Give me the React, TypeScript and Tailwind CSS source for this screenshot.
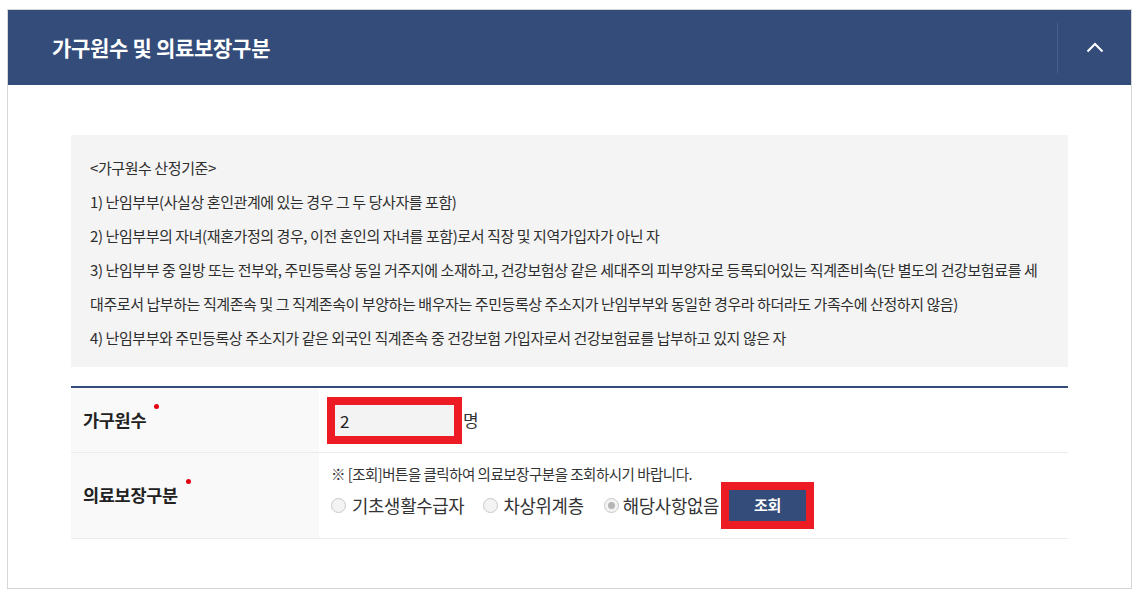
import React from "react";

const F = { fontFamily: '"Noto Sans CJK KR", "Noto Sans", sans-serif' };

function Radio({ checked }: { checked?: boolean }) {
  return (
    <span className="flex h-[15px] w-[15px] items-center justify-center rounded-full border border-[#c9c9c9] bg-[#f3f3f3]">
      {checked && <span className="h-[7px] w-[7px] rounded-full bg-[#b5b5b5]" />}
    </span>
  );
}

export default function App() {
  const lines = [
    "<가구원수 산정기준>",
    "1) 난임부부(사실상 혼인관계에 있는 경우 그 두 당사자를 포함)",
    "2) 난임부부의 자녀(재혼가정의 경우, 이전 혼인의 자녀를 포함)로서 직장 및 지역가입자가 아닌 자",
    "3) 난임부부 중 일방 또는 전부와, 주민등록상 동일 거주지에 소재하고, 건강보험상 같은 세대주의 피부양자로 등록되어있는 직계존비속(단 별도의 건강보험료를 세",
    "대주로서 납부하는 직계존속 및 그 직계존속이 부양하는 배우자는 주민등록상 주소지가 난임부부와 동일한 경우라 하더라도 가족수에 산정하지 않음)",
    "4) 난임부부와 주민등록상 주소지가 같은 외국인 직계존속 중 건강보험 가입자로서 건강보험료를 납부하고 있지 않은 자",
  ];
  return (
    <div className="h-[593px] w-[1137px] bg-white pl-[7px] pt-[9px]" style={F}>
      <div className="h-[580px] w-[1125px] border border-[#d6d6d6]">
        <div className="flex h-[75px] items-center bg-[#344c79]">
          <div className="flex-1 pl-[44px] text-[21px] font-bold tracking-[-0.3px] text-white">
            가구원수 및 의료보장구분
          </div>
          <div className="h-[50px] w-px bg-[#4b6089]" />
          <div className="flex w-[73px] items-center justify-center">
            <svg width="18" height="11" viewBox="0 0 18 11" fill="none">
              <path d="M1.5 9.5 L9 2 L16.5 9.5" stroke="white" strokeWidth="2" />
            </svg>
          </div>
        </div>
        <div className="px-[63px] pt-[50px]">
          <div className="h-[232px] bg-[#f4f4f4] px-[19px] py-[16px] text-[15px] tracking-[-0.42px] text-[#2e2e2e]">
            {lines.map((l, i) => (
              <div key={i} className="h-[34px] whitespace-nowrap leading-[34px]">
                {l}
              </div>
            ))}
          </div>
          <div className="mt-[19px] border-t-2 border-[#344c79]">
            <div className="flex h-[65px] border-b border-[#ececec]">
              <div className="flex w-[248px] items-center bg-[#f9f9f9] pl-[12px]">
                <span className="relative text-[17.5px] font-bold tracking-[-0.3px] text-[#222]">
                  가구원수
                  <span className="absolute -right-[13px] top-[-3px] h-[5px] w-[5px] rounded-full bg-[#e60012]" />
                </span>
              </div>
              <div className="flex items-center pl-[8px]">
                <div className="h-[47px] w-[135px] border-[8px] border-[#ed1c24] bg-[#f3f3f3] pl-[5px] text-[17px] leading-[31px] text-[#222]">
                  2
                </div>
                <span className="ml-[1px] text-[17px] text-[#333]">명</span>
              </div>
            </div>
            <div className="flex h-[86px] border-b border-[#ececec]">
              <div className="flex w-[248px] items-center bg-[#f9f9f9] pl-[12px]">
                <span className="relative text-[17.5px] font-bold tracking-[-0.3px] text-[#222]">
                  의료보장구분
                  <span className="absolute -right-[13px] top-[-3px] h-[5px] w-[5px] rounded-full bg-[#e60012]" />
                </span>
              </div>
              <div className="flex flex-col pl-[12px] pt-[11px]">
                <div className="text-[14.5px] leading-[20px] tracking-[-0.5px] text-[#333]">
                  ※ [조회]버튼을 클릭하여 의료보장구분을 조회하시기 바랍니다.
                </div>
                <div className="mt-[-2px] flex items-center text-[17.8px] tracking-[-0.3px] text-[#333]">
                  <Radio />
                  <span className="ml-[6px]">기초생활수급자</span>
                  <span className="ml-[19px]"><Radio /></span>
                  <span className="ml-[5px]">차상위계층</span>
                  <span className="ml-[20px]"><Radio checked /></span>
                  <span className="ml-[4px]">해당사항없음</span>
                  <div className="ml-[2px] h-[47px] w-[93px] border-[8px] border-[#ed1c24]">
                    <div className="flex h-full w-full items-center justify-center bg-[#344c79] text-[15px] font-bold text-white">
                      조회
                    </div>
                  </div>
                </div>
              </div>
            </div>
          </div>
        </div>
      </div>
    </div>
  );
}
